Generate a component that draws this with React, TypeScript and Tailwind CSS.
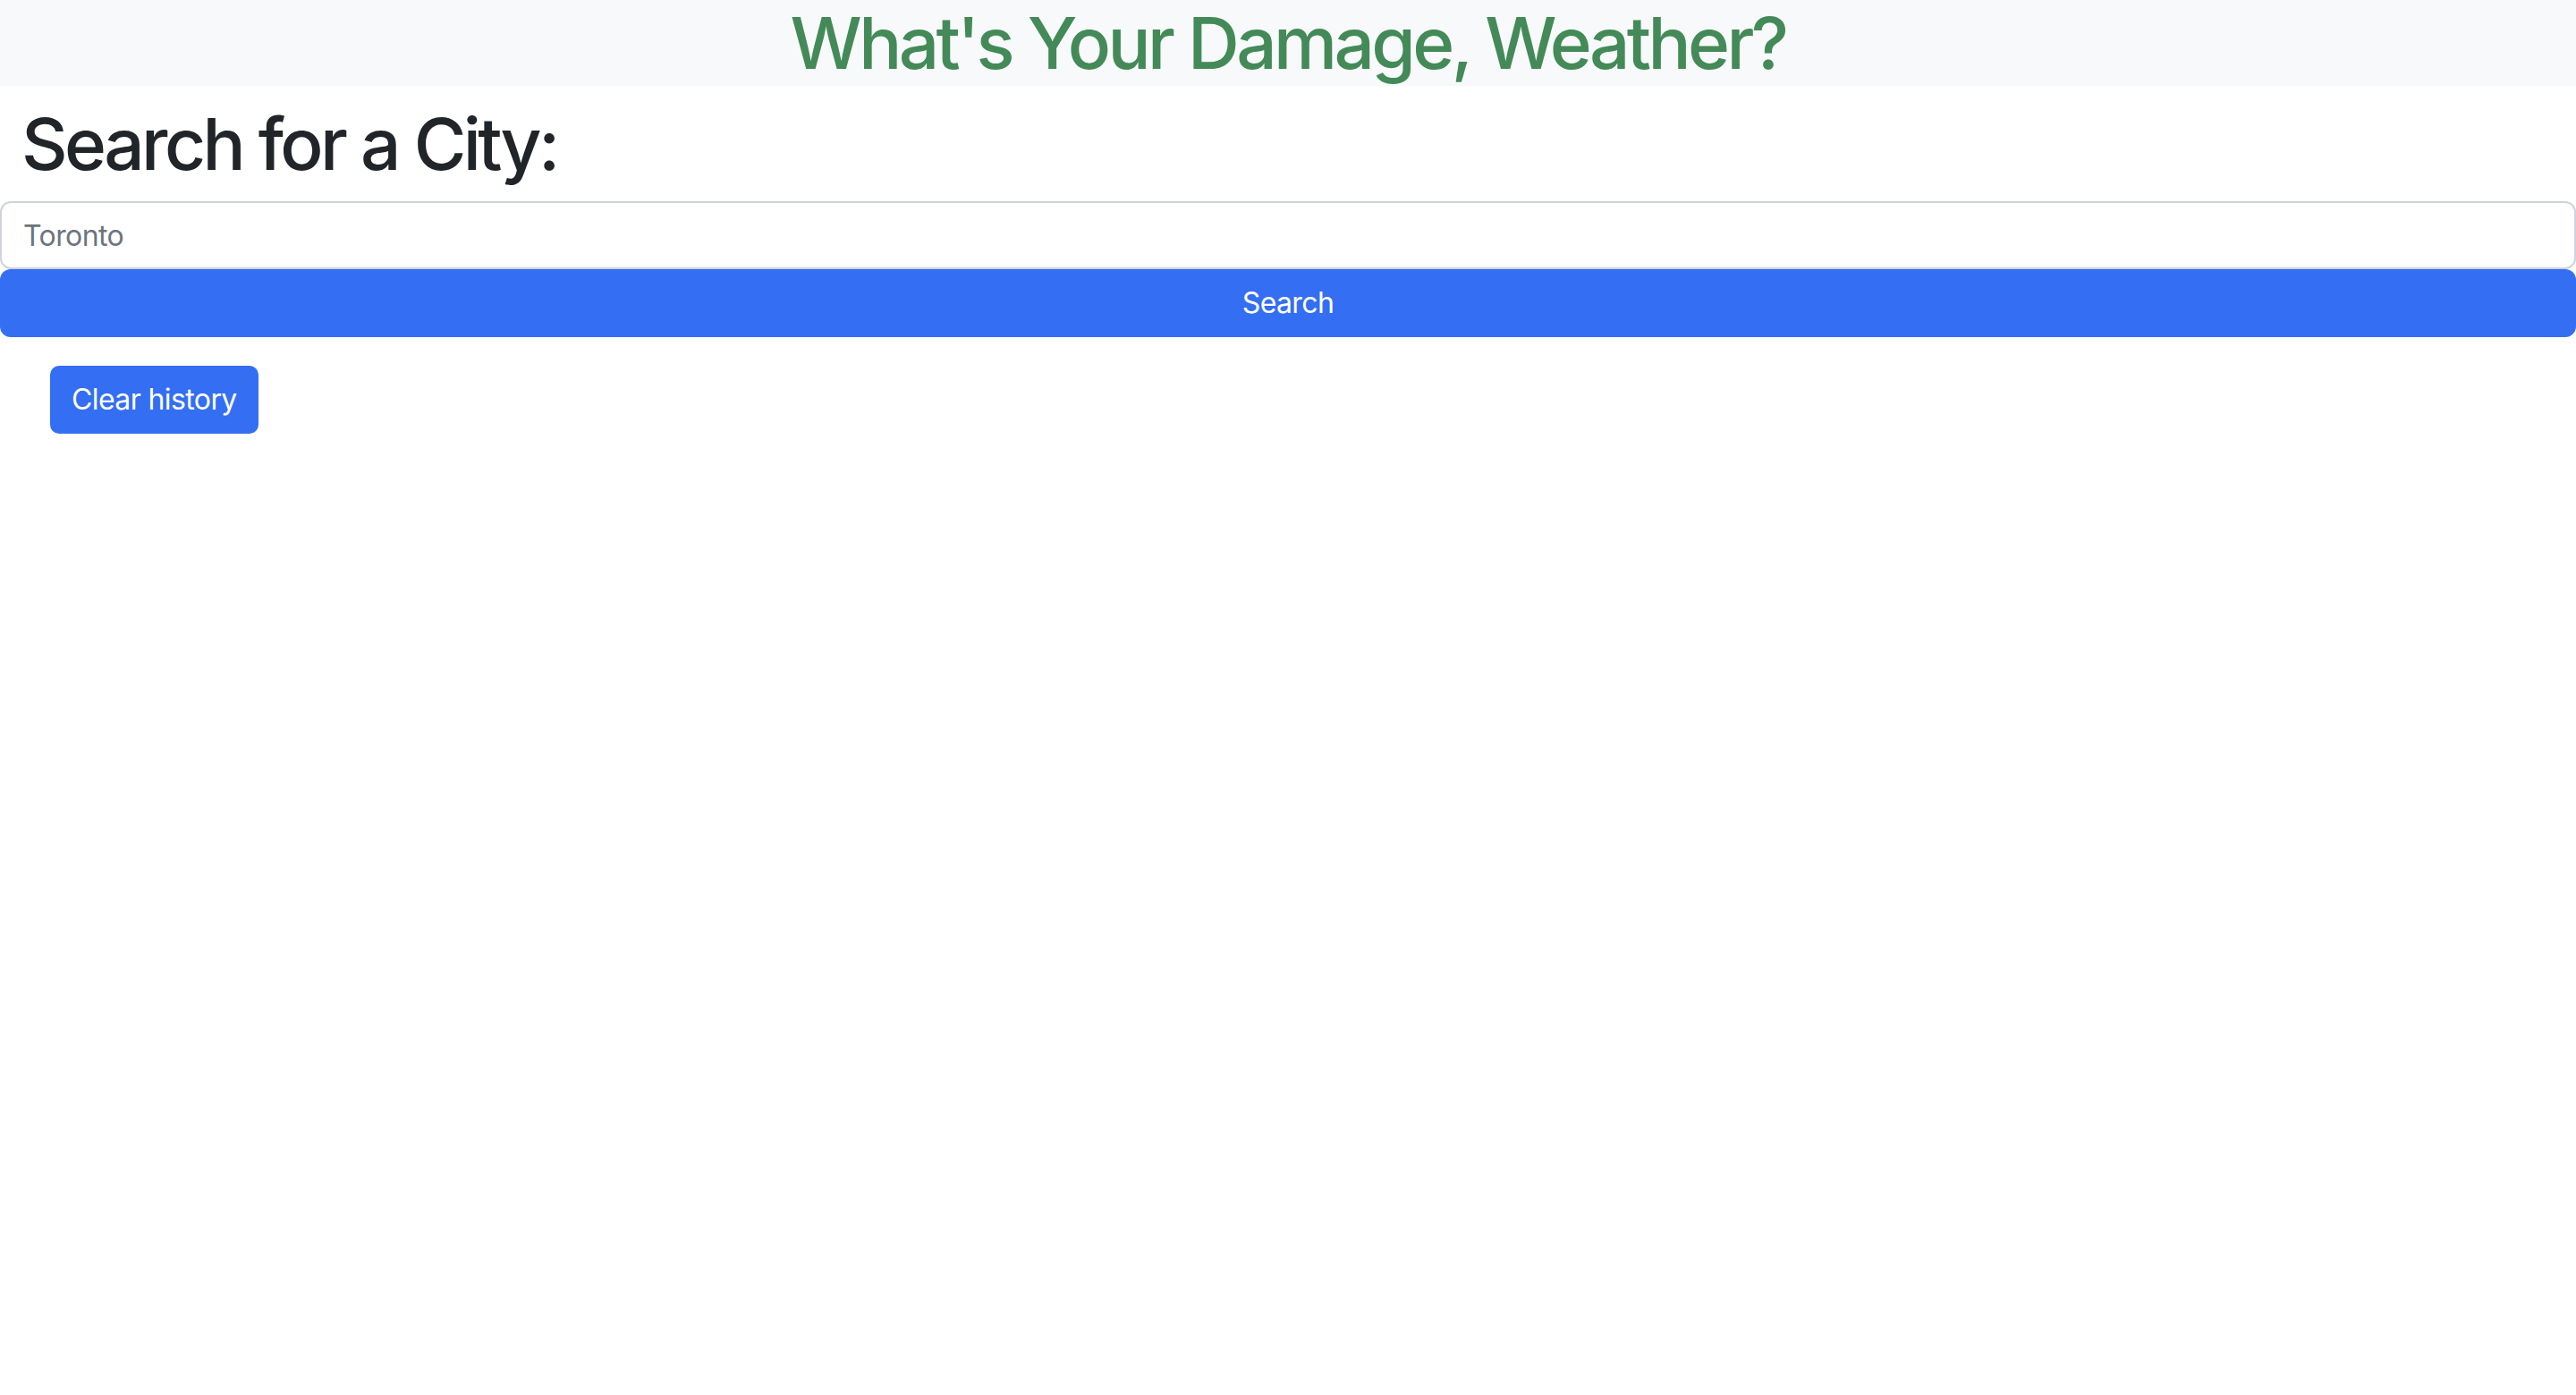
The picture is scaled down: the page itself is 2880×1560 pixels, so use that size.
const App = () => {
	return (
		<div className="min-h-screen bg-white font-['Inter','Liberation_Sans',sans-serif] text-[#212529]">
			<header className="bg-[#f8f9fa]">
				<h1 className="m-0 text-center text-[80px] font-medium leading-[96px] tracking-[-3.6px] text-[#438a58]">
					What's Your Damage, Weather?
				</h1>
			</header>
			<main className="pt-[17px]">
				<h2 className="mb-4 px-6 text-[80px] font-medium leading-[96px] tracking-[-3.6px]">Search for a City:</h2>
				<form className="flex flex-col" onSubmit={(e) => e.preventDefault()}>
					<input
						className="h-[76px] w-full rounded-xl border-2 border-[#ced4da] bg-white px-6 text-[32px] tracking-[-0.6px] text-[#212529] outline-none placeholder:text-[#6c757d]"
						placeholder="Toronto"
					/>
					<button
						type="submit"
						className="h-[76px] w-full rounded-xl bg-[#346ef3] text-[32px] leading-[48px] tracking-[-0.6px] text-white"
					>
						Search
					</button>
				</form>
				<div className="pl-14 pt-8">
					<button className="h-[76px] rounded-[10px] bg-[#346ef3] px-6 text-[32px] leading-[48px] tracking-[-0.6px] text-white">
						Clear history
					</button>
				</div>
			</main>
		</div>
	);
};

export default App;
